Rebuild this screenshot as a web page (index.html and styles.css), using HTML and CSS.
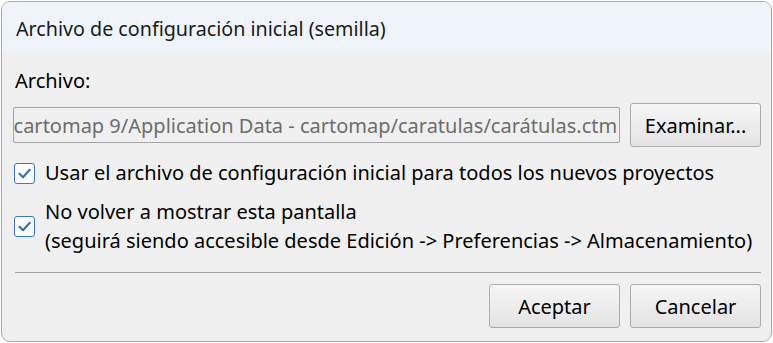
FILE: index.html
```html
<!DOCTYPE html>
<html lang="es">
<head>
<meta charset="utf-8">
<title>Archivo de configuración inicial (semilla)</title>
<link rel="stylesheet" href="styles.css">
</head>
<body>
<div class="window">
  <div class="titlebar">Archivo de configuración inicial (semilla)</div>
  <div class="content">
    <div class="label">Archivo:</div>
    <div class="file-row">
      <div class="input"><span class="input-text">cartomap 9/Application Data - cartomap/caratulas/carátulas.ctm</span></div>
      <button class="btn">Examinar...</button>
    </div>
    <div class="check-row one">
      <span class="checkbox"><svg viewBox="0 0 21 21" width="21" height="21"><path d="M5.5 10.8 L9 14.2 L15.8 6.8" fill="none" stroke="#2f6bb5" stroke-width="2" stroke-linecap="round" stroke-linejoin="round"/></svg></span>
      <span class="check-label">Usar el archivo de configuración inicial para todos los nuevos proyectos</span>
    </div>
    <div class="check-row two">
      <span class="checkbox"><svg viewBox="0 0 21 21" width="21" height="21"><path d="M5.5 10.8 L9 14.2 L15.8 6.8" fill="none" stroke="#2f6bb5" stroke-width="2" stroke-linecap="round" stroke-linejoin="round"/></svg></span>
      <span class="check-label">No volver a mostrar esta pantalla<br>(seguirá siendo accesible desde Edición -&gt; Preferencias -&gt; Almacenamiento)</span>
    </div>
    <div class="separator"></div>
    <div class="actions">
      <button class="btn">Aceptar</button>
      <button class="btn">Cancelar</button>
    </div>
  </div>
</div>
</body>
</html>
```
FILE: styles.css
```css
html, body {
  margin: 0;
  padding: 0;
  background: #ffffff;
}
body {
  font-family: "Noto Sans", "Open Sans", sans-serif;
  font-size: 20px;
  color: #000;
}
.window {
  box-sizing: border-box;
  width: 771px;
  height: 341px;
  margin: 1px 0 0 1px;
  border: 1px solid #a8a8a8;
  border-radius: 9px;
  background: #f0f0f0;
  overflow: hidden;
  display: flex;
  flex-direction: column;
}
.titlebar {
  height: 50px;
  background: #eef4f9;
  display: flex;
  align-items: center;
  padding-left: 14px;
  padding-top: 2px;
  box-sizing: border-box;
  font-size: 19.7px;
  color: #1a1a1a;
  flex: none;
}
.content {
  padding: 0 10px 0 11px;
  display: flex;
  flex-direction: column;
}
.label {
  margin-top: 17px;
  height: 24px;
  line-height: 24px;
  padding-left: 2px;
}
.file-row {
  margin-top: 10px;
  display: flex;
  align-items: center;
  gap: 10px;
}
.input {
  box-sizing: border-box;
  width: 608px;
  height: 36px;
  border: 1px solid #a3a3a3;
  border-radius: 2px;
  background: #f0f0f0;
  overflow: hidden;
  display: flex;
  justify-content: flex-end;
  align-items: center;
  padding-right: 2px;
  color: #6d6d6d;
  white-space: nowrap;
}
.input-text {
  flex: none;
}
.btn {
  box-sizing: border-box;
  width: 131px;
  height: 44px;
  border: 1px solid #acacac;
  border-radius: 3px;
  background: linear-gradient(#f6f6f6, #e3e3e3);
  font-family: inherit;
  font-size: 20px;
  color: #000;
  padding: 0;
}
.check-row {
  display: flex;
  align-items: center;
  gap: 10px;
  padding-left: 1px;
}
.check-row.one {
  margin-top: 13px;
}
.check-row.two {
  margin-top: 11px;
}
.checkbox {
  box-sizing: border-box;
  width: 21px;
  height: 21px;
  border: 1.5px solid #3f78bf;
  border-radius: 3px;
  background: #fafcfe;
  flex: none;
  display: flex;
  align-items: center;
  justify-content: center;
}
.checkbox svg {
  display: block;
  flex: none;
}
.check-label {
  line-height: 26px;
}
.check-row.two .check-label {
  line-height: 29px;
}
.separator {
  margin-top: 17px;
  height: 1px;
  background: #a0a0a0;
  margin-left: 2px;
}
.actions {
  margin-top: 11px;
  display: flex;
  justify-content: flex-end;
  gap: 10px;
}
```
